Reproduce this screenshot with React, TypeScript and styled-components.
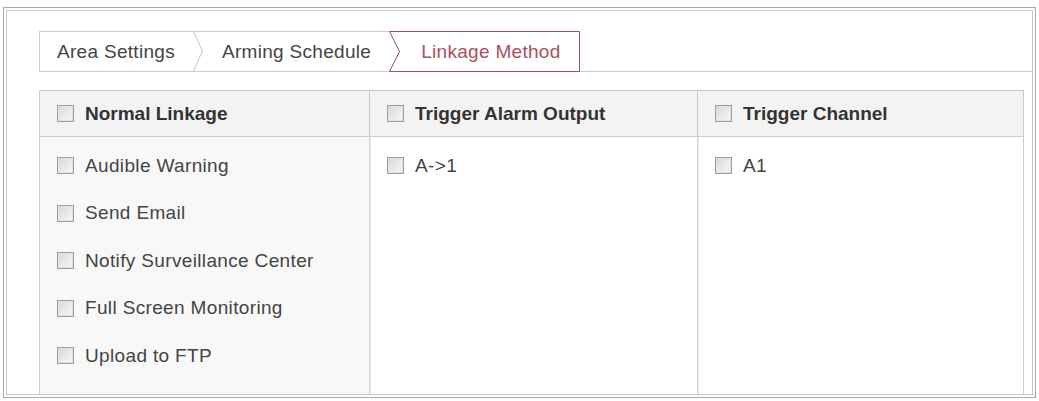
import styled, { createGlobalStyle } from "styled-components";

const GlobalStyle = createGlobalStyle`
  html, body {
    margin: 0;
    padding: 0;
    background: #ffffff;
    font-family: "Liberation Sans", Arial, sans-serif;
  }
`;

const Frame = styled.div`
  box-sizing: border-box;
  width: 1033px;
  height: 391px;
  margin: 7px 0 0 3px;
  padding: 2px;
  border: 1px solid #a9a9a9;
  background: #fff;
`;

const Inner = styled.div`
  box-sizing: border-box;
  height: 100%;
  border: 1px solid #c9c9c9;
  padding: 20px 0 0 32px;
  display: flex;
  flex-direction: column;
`;

const TabRow = styled.div`
  display: flex;
  height: 40px;
  border-bottom: 1px solid #cccccc;
`;

const Tab = styled.div<{ $first?: boolean; $padLeft: number }>`
  display: flex;
  align-items: center;
  box-sizing: border-box;
  height: 40px;
  padding: 0 18px 0 ${(p) => p.$padLeft}px;
  border-top: 1px solid #cccccc;
  border-left: ${(p) => (p.$first ? "1px solid #cccccc" : "none")};
  font-size: 19px;
  letter-spacing: 0.3px;
  color: #444;
  white-space: nowrap;
`;

const Separator = styled.svg`
  display: block;
  flex: none;
`;

const ActiveTab = styled.div`
  position: relative;
  display: flex;
  align-items: center;
  box-sizing: border-box;
  width: 191px;
  height: 41px;
  margin-bottom: -1px;
  padding: 0 18px 0 32px;
  font-size: 19px;
  letter-spacing: 0.3px;
  color: #ad4f60;
  white-space: nowrap;

  svg {
    position: absolute;
    inset: 0;
  }

  span {
    position: relative;
  }
`;

const Table = styled.div`
  flex: 1;
  margin: 18px 8px 0 0;
  display: grid;
  grid-template-columns: 329px 328px 1fr;
  grid-template-rows: 46px 1fr;
  border: 1px solid #cccccc;
  border-bottom: none;
`;

const HeaderCell = styled.div<{ $divider?: boolean }>`
  display: flex;
  align-items: center;
  gap: 11px;
  padding-left: 17px;
  background: #f3f3f3;
  border-bottom: 1px solid #cccccc;
  border-left: ${(p) => (p.$divider ? "1px solid #cccccc" : "none")};
  font-size: 19px;
  font-weight: bold;
  color: #333;
`;

const BodyCell = styled.div<{ $divider?: boolean; $shaded?: boolean }>`
  padding: 5px 0 0 17px;
  background: ${(p) => (p.$shaded ? "#f8f8f8" : "#ffffff")};
  border-left: ${(p) => (p.$divider ? "1px solid #d2d2d2" : "none")};
  box-shadow: ${(p) => (p.$divider ? "inset 1px 0 0 #ececec" : "none")};
`;

const Item = styled.label`
  display: flex;
  align-items: center;
  gap: 11px;
  height: 47.5px;
  font-size: 19px;
  letter-spacing: 0.35px;
  color: #444;
`;

const Box = styled.span`
  box-sizing: border-box;
  flex: none;
  width: 17px;
  height: 17px;
  border: 1px solid #9d9d9d;
  background: linear-gradient(135deg, #d6d6d6 0%, #ececec 60%, #f7f7f7 100%);
  box-shadow: inset 0 0 0 1px #e2e2e2;
`;

const columns = [
  {
    title: "Normal Linkage",
    items: [
      "Audible Warning",
      "Send Email",
      "Notify Surveillance Center",
      "Full Screen Monitoring",
      "Upload to FTP",
    ],
  },
  { title: "Trigger Alarm Output", items: ["A->1"] },
  { title: "Trigger Channel", items: ["A1"] },
];

function Chevron() {
  return (
    <Separator width="10" height="40" viewBox="0 0 10 40">
      <path d="M0 0.5 H10" stroke="#cccccc" strokeWidth="1" />
      <path d="M0.5 0.5 L9.5 20 L0.5 40" stroke="#c4c4c4" strokeWidth="1" fill="none" />
    </Separator>
  );
}

export default function App() {
  return (
    <>
      <GlobalStyle />
      <Frame>
        <Inner>
          <TabRow>
            <Tab $first $padLeft={17}>
              Area Settings
            </Tab>
            <Chevron />
            <Tab $padLeft={19}>Arming Schedule</Tab>
            <ActiveTab>
              <svg width="191" height="41" viewBox="0 0 191 41">
                <path
                  d="M0.5 0.5 H190.5 V40.5 H0.5 L10.5 20.5 Z"
                  fill="#ffffff"
                  stroke="#8e5560"
                  strokeWidth="1"
                />
              </svg>
              <span>Linkage Method</span>
            </ActiveTab>
          </TabRow>

          <Table>
            {columns.map((col, i) => (
              <HeaderCell key={col.title} $divider={i > 0}>
                <Box />
                {col.title}
              </HeaderCell>
            ))}
            {columns.map((col, i) => (
              <BodyCell key={col.title + "-body"} $divider={i > 0} $shaded={i === 0}>
                {col.items.map((item) => (
                  <Item key={item}>
                    <Box />
                    {item}
                  </Item>
                ))}
              </BodyCell>
            ))}
          </Table>
        </Inner>
      </Frame>
    </>
  );
}
